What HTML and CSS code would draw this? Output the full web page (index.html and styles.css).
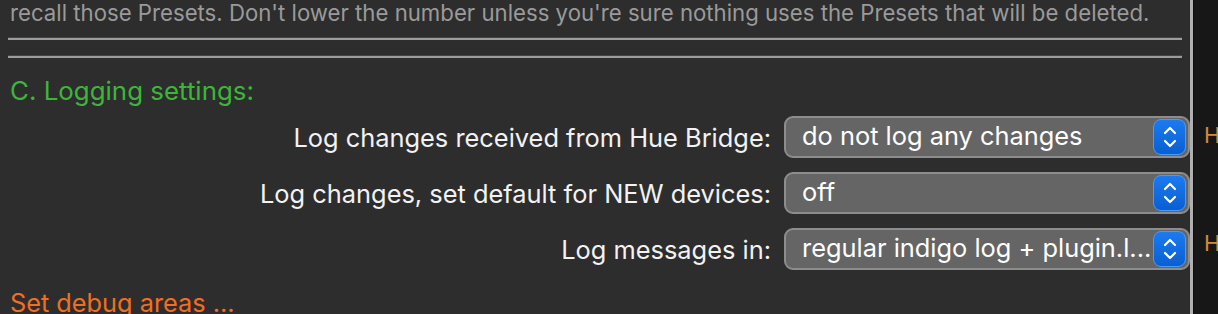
FILE: index.html
```html
<!DOCTYPE html>
<html>
<head>
<meta charset="utf-8">
<link rel="stylesheet" href="styles.css">
</head>
<body>
<div class="window">
  <div class="form">
    <p class="note">recall those Presets. Don't lower the number unless you're sure nothing uses the Presets that will be deleted.</p>
    <div class="sep sep-first"></div>
    <div class="sep"></div>
    <h2 class="heading">C. Logging settings:</h2>
    <div class="rows">
      <label class="label">Log changes received from Hue Bridge:</label>
      <div class="popup"><span class="value">do not log any changes</span><span class="stepper"><svg width="14" height="26" viewBox="0 0 14 26"><path d="M2 9 L7 4 L12 9 M2 17 L7 22 L12 17" fill="none" stroke="#fff" stroke-width="2.2" stroke-linecap="round" stroke-linejoin="round"/></svg></span></div>
      <label class="label">Log changes, set default for NEW devices:</label>
      <div class="popup"><span class="value">off</span><span class="stepper"><svg width="14" height="26" viewBox="0 0 14 26"><path d="M2 9 L7 4 L12 9 M2 17 L7 22 L12 17" fill="none" stroke="#fff" stroke-width="2.2" stroke-linecap="round" stroke-linejoin="round"/></svg></span></div>
      <label class="label">Log messages in:</label>
      <div class="popup"><span class="value">regular indigo log + plugin.l...</span><span class="stepper"><svg width="14" height="26" viewBox="0 0 14 26"><path d="M2 9 L7 4 L12 9 M2 17 L7 22 L12 17" fill="none" stroke="#fff" stroke-width="2.2" stroke-linecap="round" stroke-linejoin="round"/></svg></span></div>
    </div>
    <p class="debug">Set debug areas ...</p>
  </div>
  <div class="divider"></div>
  <div class="side">
    <span class="side-h side-h1">H</span>
    <span class="side-h side-h2">H</span>
  </div>
</div>
</body>
</html>
```

FILE: styles.css
```css
html, body {
  margin: 0;
  padding: 0;
  background: #2d2d2d;
  overflow: hidden;
}
.window {
  display: flex;
  width: 1218px;
  height: 314px;
  overflow: hidden;
  font-family: Inter, "Liberation Sans", sans-serif;
}
.form {
  width: 1190px;
  flex: none;
  background: #2d2d2d;
}
.note {
  margin: 0;
  padding-left: 10px;
  font-size: 22.2px;
  line-height: 26px;
  color: #9a9a9a;
  white-space: nowrap;
}
.sep {
  margin: 0 8px 0 8px;
  height: 2px;
  border-top: 1px solid #444;
  background: #9c9c9c;
}
.sep-first {
  margin-top: 11px;
  margin-bottom: 15px;
}
.heading {
  margin: 19px 0 0 0;
  padding-left: 10px;
  font-size: 25.9px;
  font-weight: 400;
  line-height: 28px;
  color: #3db53a;
  white-space: nowrap;
}
.rows {
  display: grid;
  grid-template-columns: 1fr 406px;
  column-gap: 13px;
  row-gap: 14px;
  margin-top: 11px;
  align-items: center;
}
.label {
  text-align: right;
  font-size: 25.4px;
  color: #f2f2f2;
  white-space: nowrap;
}
.popup {
  box-sizing: border-box;
  height: 42px;
  border: 2px solid #8d8d8d;
  border-radius: 9px;
  background: #656565;
  display: flex;
  align-items: center;
  justify-content: space-between;
  padding: 0 2px 0 16px;
}
.value {
  font-size: 25.4px;
  color: #ffffff;
  white-space: nowrap;
  margin-top: -4px;
}
.stepper {
  box-sizing: border-box;
  width: 33px;
  height: 36px;
  border-radius: 8px;
  background: linear-gradient(#1c7af0, #0a5fd2);
  border: 1.5px solid #4b9af6;
  display: flex;
  align-items: center;
  justify-content: center;
}
.debug {
  margin: 19px 0 0 0;
  padding-left: 10px;
  font-size: 25.3px;
  line-height: 28px;
  color: #f26f21;
  white-space: nowrap;
}
.divider {
  width: 3px;
  flex: none;
  background: #b0b0b0;
  border-right: 1px solid #0e0e0e;
}
.side {
  flex: 1;
  background: #171717;
  position: relative;
}
.side-h {
  position: absolute;
  left: 10px;
  font-family: Inter, "Liberation Sans", sans-serif;
  font-size: 22px;
  color: #d28a3e;
}
.side-h1 { top: 122px; }
.side-h2 { top: 230px; }
```
